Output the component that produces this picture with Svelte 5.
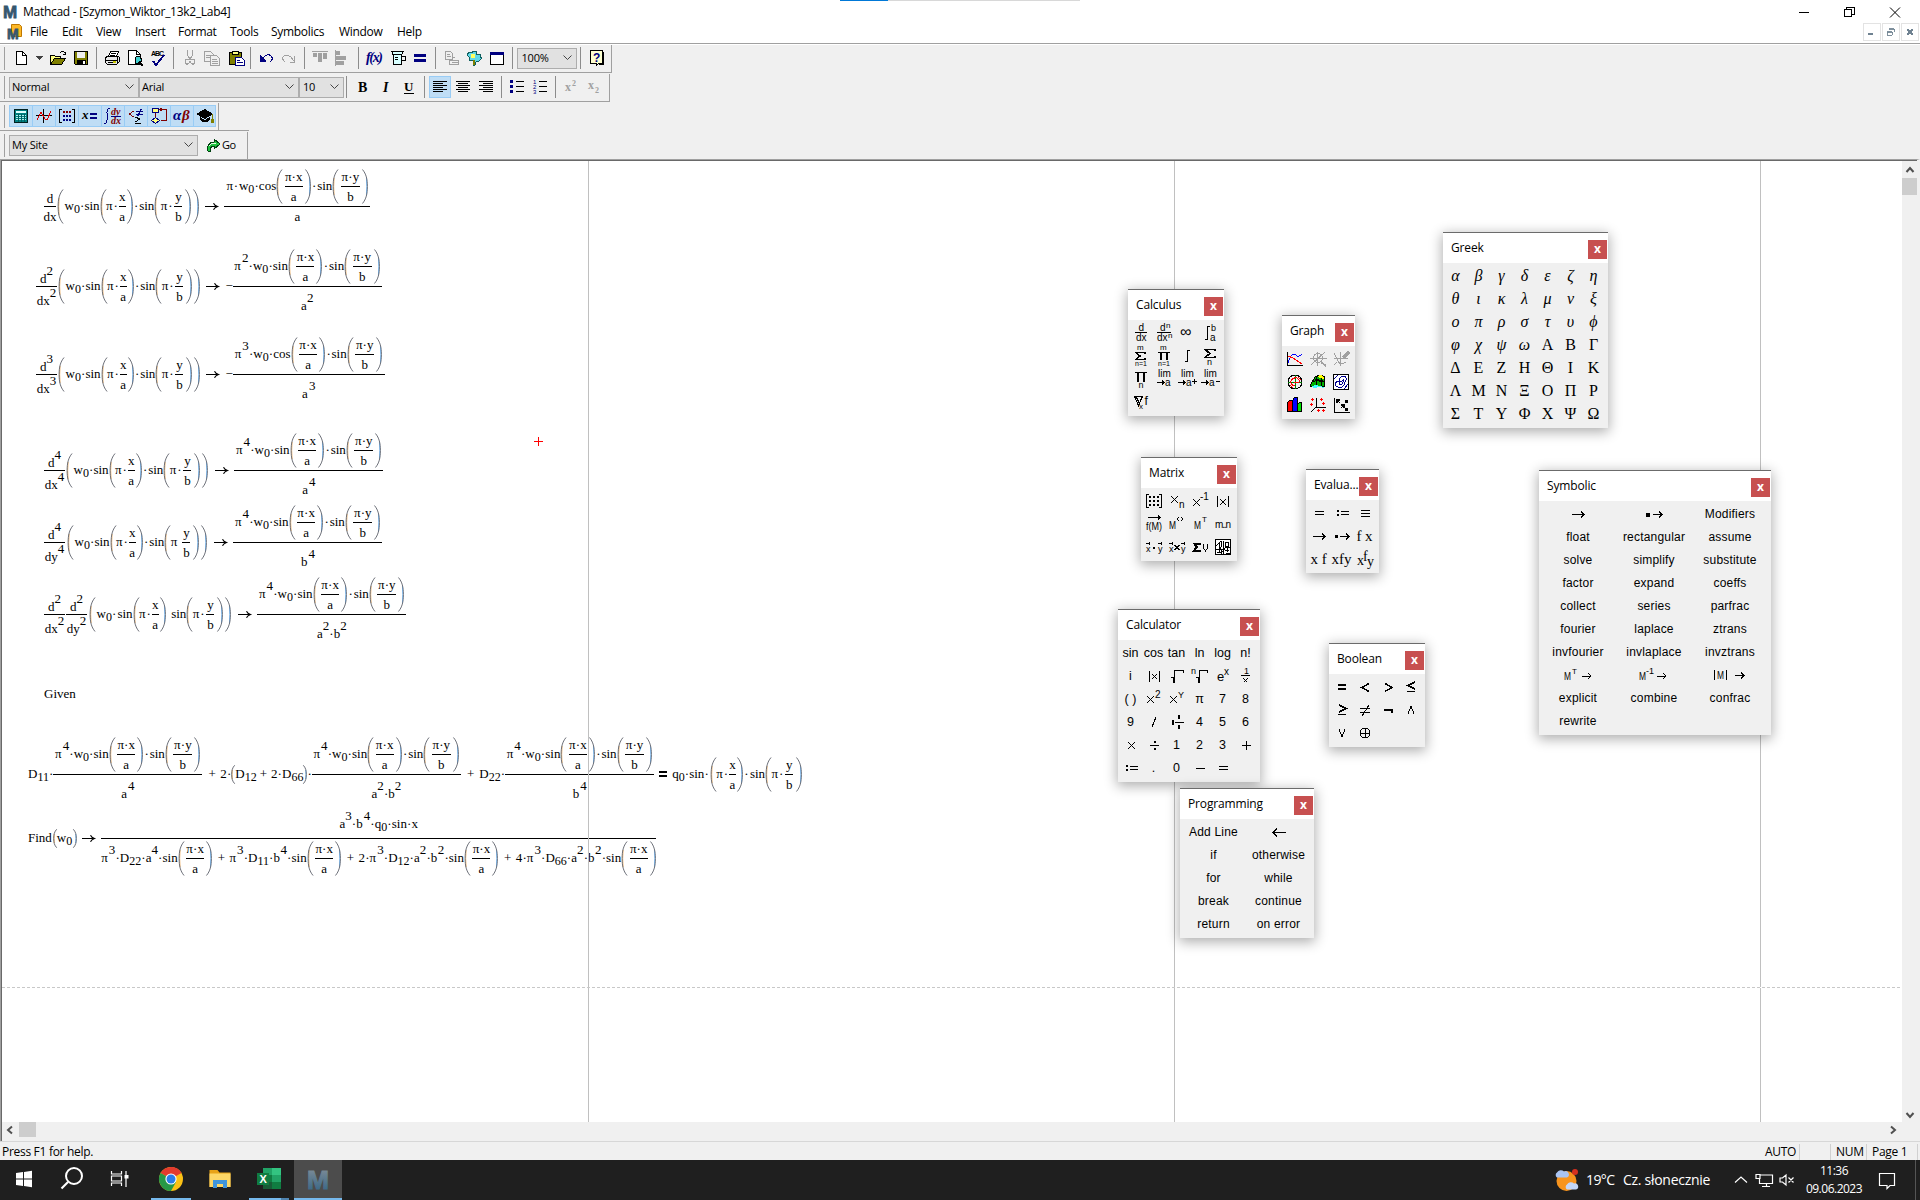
<script lang="ts">
  // ---------- icon drawing helpers (20 x 20 grid) ----------
  const s = (d: string, c = '#000', w = 1) => `<path d="${d}" fill="none" stroke="${c}" stroke-width="${w}"/>`;
  const f = (d: string, c = '#000', st = 'none') => `<path d="${d}" fill="${c}" stroke="${st}"/>`;
  const t = (x: number, y: number, txt: string, size = 9, c = '#000', extra = '') =>
    `<text x="${x}" y="${y}" font-size="${size}" fill="${c}" ${extra}>${txt}</text>`;
  const serifBold = 'font-family="Liberation Serif" font-weight="bold"';
  const serifItalic = 'font-family="Liberation Serif" font-weight="bold" font-style="italic"';
  const G = '#a0a0a0';
  const N = '#000080';
  const O = '#808000';

  const icons: Record<string, string> = {
    new: f('M5.5 3.5h6l4 4v9h-10z', '#fff', '#000') + s('M11.5 3.5v4h4'),
    caret: f('M3 8h7l-3.5 4z', '#404040'),
    open: f('M2.5 16.5v-9h4l1 1h5v2', '#ffff80', '#000') + f('M2.5 16.5l4-6h11l-4 6z', O, '#000') + s('M11.5 5.5l2-2h2l2 2m0-2v3h-3'),
    save: f('M3.5 3.5h13v13h-12l-1-1z', O, '#000') + f('M6 4h8v6h-8z', '#efefef') + f('M6 12h9v4h-9z') + f('M12 13h2v3h-2z', '#fff'),
    print: f('M6.5 8.5l2-5h8l-2 5z', '#fff', '#000') + s('M9 5.5h5M8 7.5h5') + f('M3.5 9.5l2-1h11l1 1v4l-3 3h-9l-2-2z', '#e8e8e8', '#000') + s('M4 12.5h11M15 9v6M6 14.5h7') + f('M11 13h3v2h-3z', '#c8c800'),
    preview: f('M3.5 2.5h8l4 4v10h-12z', '#fff', '#000') + s('M11.5 2.5v4h4') + f('M11.5 8.5h3l1.5 2v3l-2 2h-3l-1-2v-3z', '#40d0d0', '#000') + s('M14 14l4 4', '#000', 2),
    spell: t(3, 8, 'ABC', 7, '#000', 'font-weight="bold" textLength="13"') + s('M5 13l3 4l8-10', N, 2),
    cut: s('M7.5 2v5l3 5M12.5 2v5l-3 5M8.5 12a2 2.5 0 1 0-1 4a2 2.5 0 0 0 2-3M11.5 12a2 2.5 0 1 1 1 4a2 2.5 0 0 1-2-3', G),
    copy: f('M2.5 3.5h6l3 3v7h-9z', '#efefef', G) + f('M8.5 7.5h6l3 3v7h-9z', '#efefef', G) + s('M4 7.5h4M4 9.5h4M10 11.5h5M10 13.5h6M10 15.5h6', G),
    paste: f('M3.5 4.5h12v12h-12z', O, '#000') + f('M6.5 3.5h6v3h-6z', '#ffff80', '#000') + f('M9.5 9.5h6l3 3v5h-9z', '#fff', N) + s('M11 12.5h3M11 14.5h6', N),
    undo: s('M4.5 8v5h5M5 12l3-3q4-4 7-1q3 3-1 6', N) + f('M4 7v6h6z', N),
    redo: s('M15.5 8v6h-5M15 13l-3-4q-4-3-7-1q-3 3 1 6', G),
    alignTop: f('M2 3h16v1H2zM3 5h4v4h-4zM8 5h4v9h-4zM13 5h4v6h-4z', G),
    alignLeft: f('M6 3h4v4h-4zM6 8h10v4h-10zM6 13h8v4h-8z', G) + s('M5.5 2v16', G),
    fx: t(2, 14, 'f(x)', 14, N, serifItalic + ' textLength="17"'),
    measure: f('M4.500 3.500h12l-2 3v10h-8v-10z', '#d8ffff', '#000') + s('M5 6.500h10M8 9.500h3M8 11.500h3M15 8.500h3v4h-3'),
    equals: f('M4 6h12v3h-12zM4 11h12v3h-12z', N),
    component: f('M4.5 3.5h5l2 2v6h-7z', '#efefef', G) + s('M6 6.5h3M6 8.5h4M8 12.5h9v4h-9zM11 9.5h3M11 14.5h7', G),
    gear: f('M8 3h4v3h4v3l2 1l-3 3l-3 1l-1 3h-2v-4l-4-1v-3l-2-2l2-3h3z', '#60d8e8', '#106060') + f('M7 6h4v4h-4z', '#ffff60') + s('M10 12v5', O, 2),
    window: f('M3.5 4.5h13v12h-13z', '#fff', '#000') + f('M3 4h14v3h-14z', N),
    help: f('M4.5 2.5h12v13h-4l-2 2v-2h-6z', '#ffffd0', '#000') + t(7, 14, '?', 12, N, 'font-weight="bold"') + s('M17.5 4v12h-5'),
    bold: t(6, 15, 'B', 14, '#000', serifBold),
    italic: t(8, 15, 'I', 14, '#000', serifItalic),
    underline: t(6, 13.5, 'U', 13, '#000', serifBold) + s('M6 16.5h10'),
    left: s('M3 4.5h14M3 6.5h10M3 8.5h14M3 10.5h10M3 12.5h14M3 14.5h10'),
    center: s('M3 4.5h14M5 6.5h10M3 8.5h14M5 10.5h10M3 12.5h14M5 14.5h10'),
    right: s('M3 4.5h14M7 6.5h10M3 8.5h14M7 10.5h10M3 12.5h14M7 14.5h10'),
    bullets: f('M3 3h3v3h-3zM3 8h3v3h-3zM3 13h3v3h-3z', N) + s('M9 4.5h8M9 9.5h8M9 14.5h8'),
    numbers: t(3, 7, '1', 6, N) + t(3, 12, '2', 6, N) + t(3, 17, '3', 6, N) + s('M9 4.5h8M9 9.5h8M9 14.5h8'),
    supx: t(4, 14, 'x', 12, G, serifBold) + t(11, 9, '2', 8, G, serifBold),
    subx: t(4, 12, 'x', 12, G, serifBold) + t(11, 16, '2', 8, G, serifBold),
    calc: f('M3.5 3.5h13v13h-13z', '#008080', '#002020') + f('M5 5h10v2h-10z', '#e0ffff') + s('M5 9.5h10M5 11.5h10M5 13.5h10', '#b0f0f0') + s('M7.5 8v8M10.5 8v8M13.5 8v8', '#006060'),
    plot: s('M2 9.5h16M9.5 3v14') + s('M3 14l4-8l4 7l2 1l4-9', '#e00000'),
    matrixBar: s('M5 3.5h-2.5v13h2.5M15 3.5h2.5v13h-2.5') + f('M6 5h2v2h-2zM9 5h2v2h-2zM12 5h2v2h-2z', '#800000') + f('M6 9h2v2h-2zM9 9h2v2h-2zM12 9h2v2h-2zM6 13h2v2h-2zM9 13h2v2h-2zM12 13h2v2h-2z', N),
    evalBar: t(2, 13, 'x', 13, '#000', serifItalic) + f('M10 7h7v2h-7zM10 11h7v2h-7z', N),
    calculusBar: s('M7 2.5h-1q-2 0-2 4v7q0 4-2 4h-1', N) + t(8, 9, 'dy', 10, '#800000', serifItalic) + s('M8 10.5h10', N) + t(8, 18, 'dx', 10, '#800000', serifItalic),
    boolBar: s('M8 5l-5 3l5 3', '#800000') + s('M10 5.5h7M10 8.5h7M15 3l-3 7', N, 1.5) + s('M9 11l5 2l-5 3M9 17.5h6'),
    progBar: f('M3.5 2.5h6v4h-6z', '#ffff80', N) + f('M6.5 11.5l4 3l-4 3l-4-3z', '#ffff80', N) + s('M6.5 7v4M11 3.5h6v11h-5M13 2l-2 1.5l2 1.5', '#800000'),
    greekBar: t(1, 14, 'α', 15, N, serifItalic) + t(10, 14, 'β', 15, '#800000', serifItalic),
    symBar: f('M1 8l9-5l8 5l-8 5z') + f('M5 11l5 3l5-3v3q-5 5-10 0z') + s('M17.5 8v8', O) + f('M16 13h3v4h-3z', O),
    go: f('M4 16q-2-8 6-9v-3l6 5l-6 5v-3q-4 0-4 5z', '#20c040', '#004010') + s('M5 11q2-3 7-3', '#e0ffe0'),

    ddx: t(7.5, 8, 'd', 10) + s('M4 9.5h12') + t(5, 18, 'dx', 10),
    dndx: t(6, 8, 'd', 10) + t(12, 5, 'n', 8) + s('M3 9.5h14') + t(3, 18, 'dx', 10) + t(14, 15, 'n', 8),
    inf: t(3, 14, '∞', 16),
    defint: s('M10 3.500h-1.500q-1 0-1 2v9q0 2-1 2h-2', '#000', 1.2) + t(11, 8, 'b', 9) + t(10, 18, 'a', 10),
    sumab: t(6, 4, 'm', 8) + s('M14 8v-1.500h-9l4 3.500l-4 3.500h9v-1.500', '#000', 1.6) + t(4, 19.5, 'n=1', 7),
    prodab: t(6, 4, 'm', 8) + s('M4 6.500h12M7 6.500v7M13 6.500v7', '#000', 1.6) + t(4, 19.5, 'n=1', 7),
    int: s('M13 4.5h-1.5q-1 0-1 2v7q0 2-1 2h-2', '#000', 1.2),
    sumn: s('M15 5v-1.500h-10l5 4l-5 4h10v-1.500', '#000', 1.6) + t(7, 18.5, 'n', 9),
    prodn: s('M4 3.500h12M7 3.500v9M13 3.500v9', '#000', 1.6) + t(7.5, 19, 'n', 9),
    lim: t(4, 8, 'lim', 10) + s('M3 13.5h7M8 11.5l2 2l-2 2') + t(11, 17, 'a', 10),
    limp: t(4, 8, 'lim', 10) + s('M1 13.5h7M6 11.5l2 2l-2 2') + t(9, 17, 'a', 10) + s('M15 12.5h5M17.5 10v5'),
    limm: t(4, 8, 'lim', 10) + s('M1 13.5h7M6 11.5l2 2l-2 2') + t(9, 17, 'a', 10) + s('M15.5 12.5h4'),
    grad: s('M3.5 4.5h8l-4 9zM5 5l4 7', '#000', 1.2) + t(8, 17, 'x', 8) + t(13.5, 13, 'f', 12),

    gxy: s('M2.5 3v13.5h15') + s('M3 14q4-12 8-8q2 3 6-1', '#0000ff') + s('M3 7l5 2l9 6', '#ff0000'),
    gzoom: s('M2 9.5h17M9.5 3v14M3 16l14-13', G) + `<circle cx="10" cy="9" r="4.500" fill="none" stroke="${G}"/>` + s('M13 13l5 4', G, 2),
    gtrace: s('M3 9.5h14M9.5 3v14M3 4l3 6q2 5 5 5l4-2M3 16l3-3', G) + s('M12 9l6-6', G, 3),
    gpolar: '<circle cx="10" cy="10" r="7" fill="none" stroke="#000"/>' + s('M3 10.5h14M10.5 3v14', '#008000') + s('M10 14q-5-1-4-5q2-4 6-3q4 3 1 5l-4-1M5 13l3 3M13 5l3 3', '#ff0000'),
    gsurf: f('M2 14l5-9l5-2l5 2l-1 10l-4-1l-5 1z', '#00b000', '#000') + f('M9 4l4-1l3 2v2l-5-1z', '#ffff00') + f('M3 14l5-1l4 1l4 1v1l-5-1l-5 1z', '#40ffff') + s('M5 10l4-2l4 2l3-1M9 5l-1 8M13 6v8M7 7l8 2'),
    gcontour: f('M2.5 2.5h15v15h-15z', '#fff', '#000') + s('M5 14q-2-4 3-5q0-5 5-5q4 2 1 6q-1 5-5 6zM8 12q0-3 3-3q3-4 1 1q-1 4-4 2M3 7l4-4M13 17l4-5', '#000090'),
    gbars: f('M2.5 7.5l2-2h3v11h-5z', '#ff0000', '#000') + f('M7.5 5.5l2-3h3v14h-5z', '#0000ff', '#000') + f('M12.5 9.5l2-2h2v9h-4z', '#00e000', '#000'),
    gscatter: s('M8.5 3v9.5h9M8 12l-5 5') + s('M3 4.5h3M4.500 3v3M12 4.500h3M13.500 3v3M2 9.500h3M3.500 8v3M14 8.500h3M15.500 7v3M9 15.500h3M10.500 14v3M14 15.500h3M15.500 14v3', '#ff0000'),
    gvector: s('M3.5 3v14.5h15') + s('M6 5l3 3M6 8v-3h3M10 13l3-3M10 10h3v3M15 6l2 2M15 14l2 2M15 8v-2h2M15 16v-2h2', '#000', 1.2),

    mmat: s('M5 3.5h-2.5v13h2.5M15 3.5h2.500v13h-2.500') + f('M5 5h2v2h-2zM9 5h2v2h-2zM13 5h2v2h-2zM5 9h2v2h-2zM9 9h2v2h-2zM13 9h2v2h-2zM5 13h2v2h-2zM9 13h2v2h-2zM13 13h2v2h-2z'),
    msub: s('M4 5l7 7M11 5l-7 7') + t(12, 17, 'n', 10),
    minv: s('M3 8l7 7M10 8l-7 7') + t(10, 9, '-1', 10),
    mdet: s('M4.5 5v11M15.5 5v11M7 8l6 6M13 8l-6 6'),
    mvec: s('M4 3.500h13M14 1.500l2.500 2l-2.500 2') + t(2, 16, 'f(M)', 10, '#000', 'textLength="16" lengthAdjust="spacingAndGlyphs"'),
    mcol: t(2, 15, 'M', 11, '#000', 'textLength="7" lengthAdjust="spacingAndGlyphs"') + s('M12 3l-2 2l2 2M14 3l2 2l-2 2'),
    mtr: t(4, 15, 'M', 11, '#000', 'textLength="7" lengthAdjust="spacingAndGlyphs"') + t(12, 8, 'T', 8),
    mrange: t(2, 14, 'm..n', 10, '#000', 'textLength="16"'),
    mdot: t(2, 15, 'x', 9) + t(14, 15, 'y', 9) + s('M2 6.500h4M14 6.500h4M5 5v3M17 5v3') + f('M9 10h2v2h-2z'),
    mcross: t(2, 15, 'x', 9) + t(14, 15, 'y', 9) + s('M2 6.500h4M14 6.500h4M5 5v3M17 5v3M7.500 8l5 5M12.500 8l-5 5'),
    msum: s('M10 7.500v-1h-6l3 3.500l-3 3.500h6v-1', '#000', 2) + s('M13.500 7v4l2 3l2-3v-4'),
    mpic: f('M2.500 2.500h15v15h-15z', '#fff', '#000') + s('M3 9l5-5l1 5l-3 4M10 4v13M12 5h3v4h-3zM4 15h5l4-5h4M6 6v9M12 13h4M13 16h4M3 12h7') + s('M8 12v5M14 11v4'),

    arrow: s('M4 10.500h12M13 7.500l3 3l-3 3'),
    larrow: s('M4 10.500h13M8 6.500l-4 4l4 4'),
    dotarrow: f('M3 9h3v3h-3z') + s('M8 10.500h9M14 7.500l3 3l-3 3'),
    eq: s('M6 8.500h9M6 11.500h9'),
    def: f('M5 7h2v2h-2zM5 11h2v2h-2z') + s('M9 8.500h8M9 11.500h8'),
    equiv: s('M6 7.500h9M6 10.500h9M6 13.500h9'),
    tree: t(2, 16, 'x', 14, '#000', 'font-family="Liberation Serif"') + t(8, 12, 'f', 14, '#000', 'font-family="Liberation Serif"') + t(12, 17, 'y', 14, '#000', 'font-family="Liberation Serif"'),

    abs: s('M5.500 5v11M15.500 5v11M8 8l5 5M13 8l-5 5'),
    sqrt: s('M4 11.500h2v5M7 16.500v-12h9v2'),
    nroot: t(1, 8, 'n', 9) + s('M6 11.500h2v5M9 16.500v-12h8v2'),
    ex: t(4, 15, 'e', 13) + t(11, 9, 'x', 10),
    inv: t(8, 8, '1', 9) + s('M5 9.500h9M7.500 12.500l4 4M11.500 12.500l-4 4'),
    x2: s('M3 7l7 7M10 7l-7 7') + t(11, 9, '2', 10),
    xy: s('M3 7l7 7M10 7l-7 7') + t(11, 9, 'Y', 9),
    mixed: f('M5 8h2v5h-2zM11 3h2v4h-2zM11 13h2v4h-2z') + s('M8 10.500h9'),
    times: s('M7 7l7 7M14 7l-7 7'),
    plus: s('M6 10.500h9M10.500 6v9'),
    minus: s('M6 10.500h9'),
    divide: s('M6 10.500h9') + f('M9.500 6h2v2h-2zM9.500 13h2v2h-2z'),
    slash: s('M8 15l4-10'),

    beq: s('M6 8h8M6 12h8', '#000', 2),
    lt: s('M14 6.500l-7 4l7 4', '#000', 1.5),
    gt: s('M7 6.500l7 4l-7 4', '#000', 1.5),
    le: s('M14 5l-7 3.500l7 3.500M6 14.500h8', '#000', 1.5),
    ge: s('M7 5l7 3.500l-7 3.500M6 14.500h8', '#000', 1.5),
    ne: s('M5 8.500h10M5 12.500h10M7 16l7-11'),
    not: s('M6 10h8v3', '#000', 2),
    and: s('M7 14l3-8l3 8'),
    or: s('M7 6l3 8l3-8'),
    xor: '<circle cx="10" cy="10" r="5" fill="none" stroke="#000"/>' + s('M5 10h10M10 5v10'),

    symdot: f('M2 8.500h4v4h-4z') + s('M9 10.500h9M15 7.500l3 3l-3 3'),
    symT: t(-4, 15, 'M', 10, '#000', 'textLength="7" lengthAdjust="spacingAndGlyphs"') + t(4, 9, 'T', 8) + s('M14 11h9M20 8l3 3l-3 3'),
    symInv: t(-5, 15, 'M', 10, '#000', 'textLength="7" lengthAdjust="spacingAndGlyphs"') + t(2, 9, '-1', 9) + s('M13 11h9M19 8l3 3l-3 3'),
    symDet: s('M-5.500 5v10M6.500 5v10') + t(-3, 14, 'M', 10, '#000', 'textLength="7" lengthAdjust="spacingAndGlyphs"') + s('M15 10.500h9M21 7.500l3 3l-3 3'),
  };

  // ---------- toolbars ----------
  type Tool = { x: number; icon?: string };
  const standard: Tool[] = [
    { x: 21, icon: 'new' }, { x: 43, icon: 'caret' }, { x: 58, icon: 'open' }, { x: 81, icon: 'save' }, { x: 96 },
    { x: 112, icon: 'print' }, { x: 135, icon: 'preview' }, { x: 158, icon: 'spell' }, { x: 173 },
    { x: 190, icon: 'cut' }, { x: 212, icon: 'copy' }, { x: 236, icon: 'paste' }, { x: 250 },
    { x: 266, icon: 'undo' }, { x: 289, icon: 'redo' }, { x: 304 },
    { x: 320, icon: 'alignTop' }, { x: 340, icon: 'alignLeft' }, { x: 358 },
    { x: 374, icon: 'fx' }, { x: 397, icon: 'measure' }, { x: 420, icon: 'equals' }, { x: 435 },
    { x: 451, icon: 'component' }, { x: 474, icon: 'gear' }, { x: 497, icon: 'window' }, { x: 512 },
  ];
  const formatting: Tool[] = [
    { x: 346 }, { x: 362, icon: 'bold' }, { x: 385, icon: 'italic' }, { x: 408, icon: 'underline' }, { x: 424 },
    { x: 440, icon: 'left' }, { x: 463, icon: 'center' }, { x: 486, icon: 'right' }, { x: 501 },
    { x: 517, icon: 'bullets' }, { x: 540, icon: 'numbers' }, { x: 555 }, { x: 571, icon: 'supx' }, { x: 594, icon: 'subx' },
  ];
  // Gap in front of each tool, measured from the right edge of the one before.
  const half = (b: Tool) => (b.icon ? 10 : 0.5);
  function gaps(list: Tool[], start: number) {
    let edge = start;
    return list.map((b) => {
      const gap = b.x - half(b) - edge;
      edge = b.x + half(b);
      return { ...b, gap };
    });
  }
  const mathBar = ['calc', 'plot', 'matrixBar', 'evalBar', 'calculusBar', 'boolBar', 'progBar', 'greekBar', 'symBar'];
  const menu: [string, number][] = [['File', 32], ['Edit', 34], ['View', 39], ['Insert', 43], ['Format', 52], ['Tools', 41], ['Symbolics', 68], ['Window', 58], ['Help', 40]];

  // ---------- palettes ----------
  type Palette = { title: string; x: number; y: number; cols: number; cw: number; kind?: string; cells: string[] };
  const palettes: Palette[] = [
    { title: 'Greek', x: 1443, y: 232, cols: 7, cw: 23, kind: 'greek', cells: [...'αβγδεζηθικλμνξοπρστυϕφχψωΑΒΓΔΕΖΗΘΙΚΛΜΝΞΟΠΡΣΤΥΦΧΨΩ'] },
    { title: 'Calculus', x: 1128, y: 289, cols: 4, cw: 23, cells: '@ddx @dndx @inf @defint @sumab @prodab @int @sumn @prodn @lim @limp @limm @grad'.split(' ') },
    { title: 'Graph', x: 1282, y: 315, cols: 3, cw: 23, cells: '@gxy @gzoom @gtrace @gpolar @gsurf @gcontour @gbars @gscatter @gvector'.split(' ') },
    { title: 'Matrix', x: 1141, y: 457, cols: 4, cw: 23, cells: '@mmat @msub @minv @mdet @mvec @mcol @mtr @mrange @mdot @mcross @msum @mpic'.split(' ') },
    { title: 'Evalua...', x: 1306, y: 469, cols: 3, cw: 23, kind: 'eval', cells: ['@eq', '@def', '@equiv', '@arrow', '@dotarrow', 'f x', 'x f', 'xfy', '@tree'] },
    { title: 'Symbolic', x: 1539, y: 470, cols: 3, cw: 76, kind: 'words', cells: '@arrow @symdot Modifiers float rectangular assume solve simplify substitute factor expand coeffs collect series parfrac fourier laplace ztrans invfourier invlaplace invztrans @symT @symInv @symDet explicit combine confrac rewrite'.split(' ') },
    { title: 'Calculator', x: 1118, y: 609, cols: 6, cw: 23, kind: 'calc', cells: ['sin', 'cos', 'tan', 'ln', 'log', 'n!', 'i', '@abs', '@sqrt', '@nroot', '@ex', '@inv', '( )', '@x2', '@xy', 'π', '7', '8', '9', '@slash', '@mixed', '4', '5', '6', '@times', '@divide', '1', '2', '3', '@plus', '@def', '.', '0', '@minus', '@eq'] },
    { title: 'Boolean', x: 1329, y: 643, cols: 4, cw: 23, cells: '@beq @lt @gt @le @ge @ne @not @and @or @xor'.split(' ') },
    { title: 'Programming', x: 1180, y: 788, cols: 2, cw: 65, kind: 'words', cells: ['Add Line', '@larrow', 'if', 'otherwise', 'for', 'while', 'break', 'continue', 'return', 'on error'] },
  ];

  // ---------- worksheet math ----------
  type Node = string | { k: string; v?: string; a?: Node[]; b?: Node[]; w?: number; pb?: number; pt?: number };
  const sup = (v: string): Node => ({ k: 'sup', v });
  const sub = (v: string): Node => ({ k: 'sub', v });
  const gap = (w: number): Node => ({ k: 'gap', w });
  const frac = (a: Node[], b: Node[], w = 0, pt = 2, pb = 0): Node => ({ k: 'frac', a, b, w, pt, pb });
  const par = (...a: Node[]): Node => ({ k: 'par', a });
  const spar = (...a: Node[]): Node => ({ k: 'spar', a });

  const px = par(gap(2), frac(['π', '·', 'x'], ['a'], 18), gap(2));
  const py = par(gap(2), frac(['π', '·', 'y'], ['b'], 19), gap(2));
  const pxa = par('π', '•', frac(['x'], ['a'], 7), gap(1));
  const pyb = par('π', '•', gap(1), frac(['y'], ['b'], 8), gap(3));
  const pybPlain = par('π', gap(5), frac(['y'], ['b'], 8), gap(3));
  const body = par(gap(1), 'w', sub('0'), '·', 'sin', pxa, '•', 'sin', pyb, gap(1));
  const bodyPlain = par(gap(1), 'w', sub('0'), '·', 'sin', pxa, '•', 'sin', pybPlain, gap(1));
  const amp = (n: string, fn = 'sin'): Node[] => ['π', gap(1), sup(n), '·', 'w', sub('0'), '·', fn, px, '•', 'sin', py];
  const deriv = (v: string, n = ''): Node =>
    n ? frac(['d', sup(n)], ['d' + v, sup(n)], 21, 6, -2) : frac(['d'], ['d' + v], 12, 2, -2);

  const regions: { x: number; y: number; n: Node[] }[] = [
    { x: 44, y: 206, n: [deriv('x'), gap(1), body, gap(6), '→', gap(6), frac(['π', '•', 'w', sub('0'), '·', 'cos', px, '•', 'sin', py], ['a'], 146)] },
    { x: 36, y: 286, n: [deriv('x', '2'), gap(1), body, gap(6), '→', gap(6), '−', frac(amp('2'), ['a', sup('2')], 149, 11)] },
    { x: 36, y: 374, n: [deriv('x', '3'), gap(1), body, gap(6), '→', gap(6), '−', frac(amp('3', 'cos'), ['a', gap(1), sup('3')], 152, 11)] },
    { x: 44, y: 470, n: [deriv('x', '4'), gap(1), body, gap(7), '→', gap(6), frac(amp('4'), ['a', gap(1), sup('4')], 149, 11)] },
    { x: 44, y: 542, n: [deriv('y', '4'), gap(2), bodyPlain, gap(7), '→', gap(6), frac(amp('4'), ['b', gap(1), sup('4')], 149, 11)] },
    { x: 44, y: 614, n: [deriv('x', '2'), gap(1), deriv('y', '2'), gap(2), par(gap(1), 'w', sub('0'), '·', gap(1), 'sin', pxa, gap(5), 'sin', pyb, gap(1)), gap(7), '→', gap(6), frac(amp('4'), ['a', sup('2'), '·', 'b', sup('2')], 149, 11)] },
    { x: 44, y: 694, n: ['Given'] },
    {
      x: 28, y: 774, n: [
        'D', sub('11'), '·', frac(amp('4'), ['a', gap(1), sup('4')], 149, 11), gap(6), '+', gap(4.5), '2', '·',
        spar('D', sub('12'), gap(3), '+', gap(4), '2', '·', 'D', sub('66')), '·', frac(amp('4'), ['a', sup('2'), '·', 'b', sup('2')], 149, 11), gap(6),
        '+', gap(5), 'D', sub('22'), '·', frac(amp('4'), ['b', gap(1), sup('4')], 149, 11), gap(5), '=', gap(5),
        'q', sub('0'), '·', 'sin', '·', gap(1), pxa, '•', gap(0.5), 'sin', pyb,
      ],
    },
    {
      x: 28, y: 838, n: [
        'Find', gap(1), spar('w', sub('0'), gap(1)), gap(5), '→', gap(6),
        frac(
          ['a', sup('3'), '·', 'b', gap(1), sup('4'), '·', 'q', sub('0'), '·', 'sin', '·', 'x'],
          ['π', gap(1), sup('3'), '·', 'D', sub('22'), '·', 'a', sup('4'), '·', 'sin', px, gap(5), '+', gap(4.5),
            'π', gap(1), sup('3'), '·', 'D', sub('11'), '·', 'b', gap(0.5), sup('4'), '·', 'sin', px, gap(5), '+', gap(4.5),
            '2', '·', 'π', gap(1), sup('3'), '·', 'D', sub('12'), '·', 'a', sup('2'), '·', 'b', gap(0.5), sup('2'), '·', 'sin', px, gap(5), '+', gap(4.5),
            '4', '·', 'π', gap(1), sup('3'), '·', 'D', sub('66'), '·', 'a', sup('2'), '·', 'b', gap(0.5), sup('2'), '·', 'sin', px],
          555, 0, 5),
      ],
    },
  ];
  const guides = [588, 1174, 1760];
</script>

{#snippet icon(name: string)}
  <svg class="ic" viewBox="0 0 20 20">{@html icons[name]}</svg>
{/snippet}

{#snippet tools(list: Tool[], start: number)}
  {#each gaps(list, start) as b}
    {#if b.icon}
      <span class="tool" class:on={b.icon === 'left'} style:margin-left="{b.gap}px">{@render icon(b.icon)}</span>
    {:else}
      <span class="sep" style:margin-left="{b.gap}px"></span>
    {/if}
  {/each}
{/snippet}

{#snippet combo(label: string, cls: string)}
  <span class="combo {cls}"><span>{label}</span><svg viewBox="0 0 9 6"><path d="M.5 .5l4 4l4-4" /></svg></span>
{/snippet}

{#snippet bracket(flip: boolean)}
  <svg class="br" class:flip viewBox="0 0 7 35" preserveAspectRatio="none">
    <path class="fringe" d="M2.200 9q-.8 8.500 0 17" />
    <path d="M6.500 .5C2.500 5 1.200 10 1.200 17.500S2.500 30 6.500 34.500" />
  </svg>
{/snippet}

{#snippet math(list: Node[])}
  {#each list as n}
    {#if typeof n === 'string'}
      {#if n === '·'}<span class="dot">·</span>
      {:else if n === '•'}<span class="dot wide">·</span>
      {:else if n === '→'}<svg class="arr" viewBox="0 0 13 9"><path d="M0 4.500h12M8.500 1.200q1 2.300 4 3.300q-3 1-4 3.300" /></svg>
      {:else if n === '='}<span class="booleq"></span>
      {:else}<span class="t">{n}</span>{/if}
    {:else if n.k === 'gap'}<span class="gap" style:width="{n.w}px"></span>
    {:else if n.k === 'sup'}<span class="t sup">{n.v}</span>
    {:else if n.k === 'sub'}<span class="t sub">{n.v}</span>
    {:else if n.k === 'frac'}
      <span class="frac" style:width={n.w ? `${n.w}px` : 'auto'}>
        <span class="num" style:margin-bottom="{n.pb}px">{@render math(n.a!)}</span>
        <span class="bar"></span>
        <span class="den" style:margin-top="{n.pt}px">{@render math(n.b!)}</span>
      </span>
    {:else}
      <span class="par" class:small={n.k === 'spar'}>
        {@render bracket(false)}{@render math(n.a!)}{@render bracket(true)}
      </span>
    {/if}
  {/each}
{/snippet}

<div class="app">
  <div class="progress"></div>
  <header class="title">
    <svg class="logo" viewBox="0 0 16 18"><text x="0" y="15" textLength="15">M</text></svg>
    <span class="caption">Mathcad - [Szymon_Wiktor_13k2_Lab4]</span>
    <svg class="winbtns" viewBox="0 0 110 20">
      <path d="M4 10.500h10M49.500 7.500h7v7h-7zM51.500 7v-2h7.500v7.500h-2" />
      <path class="smooth" d="M95 5.500l10 10M105 5.500l-10 10" />
    </svg>
  </header>
  <nav class="menu">
    <svg class="doc" viewBox="0 0 16 18"><path d="M4.500 1.500h8l2 2v10h-10z" /><text x="0" y="16" textLength="11">M</text></svg>
    {#each menu as [label, w]}<span style:width="{w}px">{label}</span>{/each}
    <div class="mdi">
      <svg viewBox="0 0 18 18"><path d="M4 11.500h6" stroke-width="2" /></svg>
      <svg viewBox="0 0 18 18"><path d="M4.500 8.500h6v4h-6zM4 9h7M7 5.500h5.500v4M7 6h6" /></svg>
      <svg viewBox="0 0 18 18"><path d="M6 6l6 6M12 6l-6 6" stroke-width="2" /></svg>
    </div>
  </nav>

  <section class="bars">
    <div class="row r1">
      <i class="grip"></i>{@render tools(standard, 5)}
      {@render combo('100%', 'zoom')}
      <span class="sep"></span><span class="tool last">{@render icon('help')}</span>
    </div>
    <div class="row r2">
      <i class="grip"></i>
      {@render combo('Normal', 'style')}{@render combo('Arial', 'font')}{@render combo('10', 'size')}
      {@render tools(formatting, 344)}
    </div>
    <div class="under"><div class="row r3">
      <i class="grip"></i>
      {#each mathBar as m}<span class="mb">{@render icon(m)}</span>{/each}
    </div></div>
    <div class="row r4">
      <i class="grip"></i>{@render combo('My Site', 'site')}
      <span class="tool go">{@render icon('go')}</span><span>Go</span>
    </div>
  </section>

  <main>
    <div class="sheet">
      {#each regions as r}
        <div class="region" style:left="{r.x - 2}px" style:top="{r.y - 201}px">{@render math(r.n)}</div>
      {/each}
      {#each guides as g}<i class="guide" style:left="{g - 2}px"></i>{/each}
      <i class="pagebreak"></i>
      <i class="cross"></i>
    </div>
    <div class="vscroll">
      <svg viewBox="0 0 16 16"><path d="M4.500 10l3.500-4l3.500 4" /></svg>
      <b></b>
      <svg viewBox="0 0 16 16"><path d="M4.500 6l3.500 4l3.500-4" /></svg>
    </div>
    <div class="hscroll">
      <svg viewBox="0 0 16 16"><path d="M10 4.500l-4 3.500l4 3.500" /></svg>
      <b></b>
      <svg viewBox="0 0 16 16"><path d="M6 4.500l4 3.500l-4 3.500" /></svg>
    </div>
  </main>

  <footer class="status">
    <span class="msg">Press F1 for help.</span>
    <span class="auto">AUTO</span><span class="blank"></span><span class="numl">NUM</span><span class="page">Page 1</span>
  </footer>

  <div class="taskbar">
    <span class="tb"><svg viewBox="0 0 24 24"><path fill="#fff" d="M4 6l7-1v6.500H4zM12 4.900l8-1.100v7.700h-8zM4 12.500h7V19l-7-1zM12 12.500h8v7.700l-8-1.100z" /></svg></span>
    <span class="tb"><svg viewBox="0 0 24 24"><circle cx="14" cy="9" r="8" fill="none" stroke="#fff" stroke-width="2" /><path d="M8 15l-6.500 6.500" stroke="#fff" stroke-width="2.200" /></svg></span>
    <span class="tb"><svg viewBox="0 0 24 24"><path d="M3.500 4v3h10V4M3.500 19v-3h10v3M3.500 9h10v5h-10zM18 4v16" fill="none" stroke="#fff" stroke-width="1.200" /><path d="M16.500 8h4v3.500h-4z" fill="#fff" /></svg></span>
    <span class="tb chrome run"><svg viewBox="0 0 24 24"><circle cx="12" cy="12" r="12" fill="#fbc116" /><path d="M12 12L1.600 6A12 12 0 0 1 22.400 6z" fill="#e33b2e" /><path d="M12 0A12 12 0 0 1 22.400 6H12z" fill="#e33b2e" /><path d="M12 12l-10.400-6A12 12 0 0 0 12 24l5-9z" fill="#279847" /><circle cx="12" cy="12" r="5.600" fill="#fff" /><circle cx="12" cy="12" r="4.500" fill="#2a7de9" /></svg></span>
    <span class="tb"><svg viewBox="0 0 24 24"><path d="M1.500 3h8l2 2.500h11V20h-21z" fill="#e8a317" /><path d="M1.500 6.500h21V20h-21z" fill="#fdd766" /><path d="M5 21v-8h14v8h-4v-4H9v4z" fill="#3f95dc" /></svg></span>
    <span class="tb excel run"><svg viewBox="0 0 24 24"><path d="M6 1h18v21H6z" fill="#21a366" /><path d="M15 1h9v7h-9z" fill="#33c481" /><path d="M6 8h9v7H6z" fill="#107c41" /><path d="M6 15h18v7H6z" fill="#185c37" /><path d="M15 15h9v7h-9z" fill="#107c41" /><path d="M0 6h12v12H0z" fill="#107c41" /><text x="2.500" y="16" font-size="11" font-weight="bold" fill="#fff">X</text></svg></span>
    <span class="tb mc run"><svg viewBox="0 0 24 24"><defs><linearGradient id="mg" x1="0" y1="0" x2="0" y2="1"><stop offset="0" stop-color="#87919a" /><stop offset="1" stop-color="#2d6184" /></linearGradient></defs><text x="1" y="22" font-size="26" font-weight="bold" fill="url(#mg)" stroke="url(#mg)" textLength="22" lengthAdjust="spacingAndGlyphs">M</text></svg></span>
    <div class="tray">
      <svg class="weather" viewBox="0 0 26 24"><circle cx="13.500" cy="13" r="10" fill="#f7941d" /><circle cx="22" cy="4" r="3" fill="#d5301f" /><path d="M4 9.500a3 3 0 0 1 0-5a4.500 4.500 0 0 1 7-1a3 3 0 0 1 3 6z" fill="#a9c4f2" /><path d="M14 21.500a3 3 0 0 1 0-5a4.500 4.500 0 0 1 7-1a3 3 0 0 1 2 6z" fill="#c3d6f7" /></svg>
      <span class="temp">19°C</span><span class="wx">Cz. słonecznie</span>
      <svg class="sys" viewBox="0 0 68 20"><path d="M7 12.500l6-5.500l6 5.500M32 5h12.500v8.500h-13V9M38.500 13.500v3M34 16.500h8M28 4.500h4v4h-4zM52 8h2.500l3.500-3v10l-3.500-3h-2.500zM60.500 7.500l5 5M65.500 7.500l-5 5" /></svg>
      <span class="clock"><span>11:36</span><span>09.06.2023</span></span>
      <svg class="note" viewBox="0 0 20 20"><path d="M2.500 3.500h15v12h-4.500l-3 3v-3H2.500z" /></svg>
      <i class="peek"></i>
    </div>
  </div>

  {#each palettes as p}
    <section class="palette {p.kind ?? ''}" style:left="{p.x}px" style:top="{p.y}px">
      <div class="ptitle"><span>{p.title}</span><button>x</button></div>
      <div class="cells" style:grid-template-columns="repeat({p.cols}, {p.cw}px)">
        {#each p.cells as c, i}
          <span class="cell" class:lower={i < 25}>{#if c[0] === '@'}{@render icon(c.slice(1))}{:else}{c}{/if}</span>
        {/each}
      </div>
    </section>
  {/each}
</div>

<style>
  :global(body) { margin: 0; overflow: hidden; }
  .app {
    position: relative; width: 1920px; height: 1200px; display: flex; flex-direction: column;
    background: #f0f0f0; color: #000; font: 12px/16px 'Open Sans', 'Noto Sans', sans-serif; letter-spacing: -0.3px;
  }
  svg { display: block; flex: none; overflow: visible; }
  i, b { display: block; flex: none; }
  .progress { position: absolute; left: 840px; top: 0; width: 240px; height: 1px; background: linear-gradient(90deg, #0078d7 48px, #d8d8d8 48px); }

  .title { height: 24px; background: #fff; display: flex; align-items: center; }
  .logo { width: 16px; height: 18px; margin: 0 4px 0 3px; }
  .logo text, .doc text { font: bold 17px 'Liberation Sans', sans-serif; fill: #35566e; stroke: #35566e; stroke-width: 0.8; }
  .doc text { font-size: 14px; }
  .winbtns { width: 110px; height: 20px; margin-left: auto; margin-right: 15px; fill: none; stroke: #000; shape-rendering: crispEdges; }
  .smooth { shape-rendering: auto; }
  .caption { width: 206px; white-space: nowrap; letter-spacing: -0.28px; }
  .menu { height: 17px; padding-bottom: 2px; background: #fff; display: flex; align-items: center; border-bottom: 1px solid #a0a0a0; box-shadow: 0 1px #fff; }
  .menu > span { white-space: nowrap; }
  .doc { width: 16px; height: 18px; margin: 0 7px 0 7px; fill: #fdb827; stroke: #c07800; }
  .mdi { margin-left: auto; margin-right: 1px; display: flex; gap: 1px; }
  .mdi svg { width: 16px; height: 16px; border: 1px solid #e3e3e3; fill: none; stroke: #6f8291; shape-rendering: crispEdges; }

  .bars { height: 114px; padding-top: 1px; display: flex; flex-direction: column; align-items: flex-start; gap: 1px; }
  .row { box-sizing: border-box; height: 28px; display: flex; align-items: center; border-right: 1px solid #a0a0a0; border-bottom: 1px solid #a0a0a0; }
  .r1 { width: 612px; }
  .r2 { width: 610px; }
  .under { width: 249px; height: 28px; box-sizing: border-box; border-bottom: 1px solid #a0a0a0; }
  .r3 { width: 219px; height: 27px; border-bottom: 0; }
  .r4 { width: 248px; height: 27px; border-bottom: 0; }
  .grip { width: 1px; height: 23px; margin-left: 4px; background: #a0a0a0; }
  .tool { width: 20px; height: 20px; flex: none; }
  .tool.on { background: #bfddf5; box-shadow: 0 0 0 1px #99ccf5; }
  .sep { width: 1px; height: 22px; background: #8c8c8c; flex: none; }
  .ic { width: 20px; height: 20px; shape-rendering: crispEdges; }
  .ic :global(text) { font-family: 'Liberation Sans', sans-serif; letter-spacing: 0; }
  .ic :global(text[font-family='Liberation Serif']) { font-family: 'Liberation Serif', serif; }
  .combo { box-sizing: border-box; height: 21px; flex: none; display: flex; align-items: center; justify-content: space-between; padding: 0 4px 0 2px; border: 1px solid #adadad; background: #e1e1e1; font-size: 11px; letter-spacing: -0.2px; }
  .combo svg { width: 9px; height: 6px; fill: none; stroke: #444; }
  .zoom { width: 60px; margin: 0 3px 0 4px; padding-left: 4px; }
  .last { margin-left: 5px; }
  .style { width: 130px; margin-left: 4px; }
  .font { width: 160px; }
  .size { width: 45px; padding-left: 3px; }
  .mb { box-sizing: border-box; width: 23px; height: 22px; border: 1px solid #99ccf5; border-right-width: 0; background: #bfddf5; display: grid; place-items: center; }
  .mb:last-child { border-right-width: 1px; }
  .grip + .mb { margin-left: 4px; }
  .site { width: 189px; margin-left: 4px; }
  .go { margin: 0 -2px 0 6px; }
  .row > span:last-child { font-size: 11px; letter-spacing: -0.5px; }

  main { box-sizing: border-box; height: 983px; border-top: 1px solid #a0a0a0; border-left: 1px solid #a0a0a0; display: grid; grid-template: 962px 1fr / 1901px 15px; border-right: 3px solid #f0f0f0; }
  .sheet { position: relative; box-sizing: border-box; background: #fff; border-top: 1px solid #696969; border-left: 1px solid #696969; overflow: hidden; }
  .vscroll { display: flex; flex-direction: column; background: #f0f0f0; border-top: 1px solid #696969; }
  .vscroll svg, .hscroll svg { width: 16px; height: 16px; fill: none; stroke: #505050; stroke-width: 2; }
  .vscroll svg:first-child { margin-top: 1px; }
  .vscroll b { width: 15px; height: 17px; background: #cdcdcd; }
  .vscroll svg:last-child { margin-top: auto; margin-bottom: -1px; }
  .hscroll { display: flex; border-left: 1px solid #696969; }
  .hscroll b { width: 17px; height: 15px; margin-left: 1px; background: #cdcdcd; }
  .hscroll svg:last-child { margin-left: auto; margin-right: 1px; }
  .guide { position: absolute; top: 0; bottom: 0; width: 1px; background: #c0c0c0; }
  .pagebreak { position: absolute; left: 0; right: 0; top: 826px; height: 1px; background: repeating-linear-gradient(90deg, #c8c8c8 0 3px, #fff 3px 5px); }
  .cross { position: absolute; left: 532px; top: 276px; width: 9px; height: 9px; background: linear-gradient(#f00, #f00) 50% / 9px 1px no-repeat, linear-gradient(#f00, #f00) 50% / 1px 9px no-repeat; }

  .region { position: absolute; height: 81px; display: flex; align-items: center; font: 13px/17px 'Liberation Serif', 'Times New Roman', serif; letter-spacing: 0; white-space: nowrap; }
  .t { display: block; height: 17px; position: relative; top: -1px; }
  .sup { top: -9px; }
  .sub { top: 3px; font-size: 12px; }
  .dot { width: 4.5px; text-align: center; display: flex; justify-content: center; position: relative; top: -1px; }
  .wide { width: 6px; }
  .gap { flex: none; }
  .arr { width: 13px; height: 9px; fill: none; stroke: #000; stroke-width: 1.1; }
  .booleq { width: 8px; height: 2px; border-top: 2px solid #000; border-bottom: 2px solid #000; }
  .frac { display: grid; grid-template-rows: 1fr 1px 1fr; flex: none; }
  .num, .den { display: flex; align-items: center; justify-content: center; min-width: 0; }
  .num { align-self: end; }
  .den { align-self: start; }
  .bar { background: #000; }
  .par { display: flex; align-items: center; flex: none; }
  .br { width: 6.5px; height: 35px; fill: none; stroke: #6c6f78; stroke-width: 1; }
  .br path { vector-effect: non-scaling-stroke; }
  .small > .br { width: 4px; height: 19px; }
  .fringe { stroke: #f0b060; }
  .flip { transform: scaleX(-1); }
  .flip .fringe { stroke: #70b8f8; }

  .status { box-sizing: border-box; height: 19px; border-top: 1px solid #d7d7d7; display: flex; align-items: center; padding: 1px 2px 0 0; }
  .status .msg { margin-left: 2px; flex: 1; }
  .status span:not(.msg) { height: 16px; box-sizing: border-box; border-right: 1px solid #d0d0d0; }
  .auto { width: 35px; }
  .blank { width: 31px; }
  .numl { width: 36px; padding-left: 5px; }
  .page { width: 51px; padding-left: 5px; }
  .status .page { border: 0; }

  .taskbar { height: 40px; background: #1f1f1f; color: #fff; display: flex; align-items: stretch; }
  .tb { box-sizing: border-box; width: 48px; display: grid; place-items: center; border-bottom: 2px solid transparent; }
  .tb svg { width: 24px; height: 24px; }
  .tb text { font-family: 'Liberation Sans', sans-serif; letter-spacing: 0; }
  .chrome { margin: 0 4px 0 7px; width: 40px; }
  .tb:nth-child(5) { width: 50px; margin-right: 4px; }
  .run { border-bottom-color: #76b9ed; }
  .excel { width: 40px; margin-right: 5px; border-image: linear-gradient(90deg, #76b9ed 31px, #4f84b0 31px) 1; border-style: solid; border-width: 0 0 2px; }
  .mc { background: #4c4c4c; }
  .tray { margin-left: auto; display: flex; align-items: center; font-size: 14px; letter-spacing: -0.2px; }
  .weather { width: 26px; height: 24px; margin-right: 7px; }
  .temp { width: 37px; letter-spacing: -0.6px; }
  .wx { width: 105px; white-space: nowrap; letter-spacing: -0.28px; }
  .sys { width: 68px; height: 20px; fill: none; stroke: #fff; stroke-width: 1.2; }
  .clock { width: 68px; margin-left: 4px; display: grid; gap: 2px; text-align: center; font-size: 12px; letter-spacing: -0.5px; }
  .note { width: 20px; height: 20px; margin: 0 18px 0 9px; fill: none; stroke: #fff; stroke-width: 1.200; }
  .peek { width: 1px; height: 40px; margin-right: 4px; background: #555; }

  .palette { position: absolute; background: #f0f0f0; box-shadow: 0 3px 12px 1px rgba(0, 0, 0, 0.32); font-family: 'Liberation Sans', Arial, sans-serif; letter-spacing: 0.2px; }
  .ptitle { box-sizing: border-box; height: 31px; border-top: 1px solid #6b6b6b; background: #fff; display: flex; justify-content: space-between; align-items: center; padding-left: 8px; font: 12px/16px 'Open Sans', sans-serif; letter-spacing: -0.15px; }
  .ptitle button { width: 19px; height: 19px; margin: 3px 1px 0 0; padding: 0 0 2px; border: 0; background: #c75050; color: #fff; font: bold 12px/14px 'Open Sans', sans-serif; }
  .cells { display: grid; grid-auto-rows: 23px; padding: 1px 3px 3px 1px; }
  .cell { display: grid; place-items: center; height: 23px; white-space: pre; min-width: 0; }
  .calc .cell { letter-spacing: 0; font-size: 12.500px; }
  .greek .cell, .eval .cell { font: 16px/20px 'Liberation Serif', serif; letter-spacing: 0; }
  .eval .cell { font-size: 15px; }
  .greek .lower { font-style: italic; }
</style>
